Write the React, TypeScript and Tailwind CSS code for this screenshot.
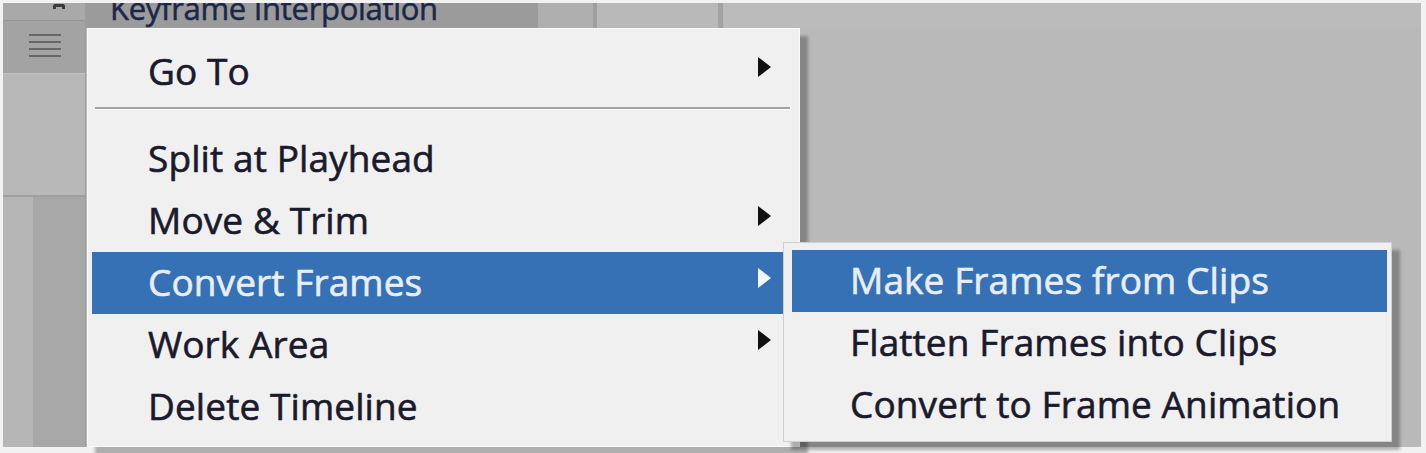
import { ReactNode } from "react";

const font = { fontFamily: '"Open Sans", "Noto Sans", Arial, sans-serif' };

function Arrow({ light }: { light?: boolean }) {
  return (
    <svg width="15" height="22" viewBox="0 0 15 22" className="shrink-0">
      <path d="M1 1 L14 11 L1 21 Z" fill={light ? "#f4f6fa" : "#111111"} />
    </svg>
  );
}

function Item({
  label,
  sub,
  active,
  pl = "pl-[56px]",
}: {
  label: string;
  sub?: boolean;
  active?: boolean;
  pl?: string;
}) {
  return (
    <div
      className={`flex items-center h-[62px] ${pl} pr-[18px] text-[37px] tracking-[0.1px] [-webkit-text-stroke:0.6px_currentColor] ${
        active ? "bg-[#3671b6] text-[#e9eef6]" : "text-[#1b1a2b]"
      }`}
    >
      <span className="flex-1 leading-none whitespace-nowrap pb-[4px]">{label}</span>
      {sub && (
        <span className="-mt-[10px] flex">
          <Arrow light={active} />
        </span>
      )}
    </div>
  );
}

function Panel({ children, className }: { children: ReactNode; className: string }) {
  return <div className={className}>{children}</div>;
}

export default function App() {
  return (
    <div
      className="relative w-[1426px] h-[453px] overflow-hidden bg-[#f2f2f2] pt-[3px] pl-[3px] pr-[5px] pb-[6px]"
      style={font}
    >
      <div className="flex h-full bg-[#b9b9b9]">
        {/* left rail */}
        <div className="w-[83px] flex flex-col border-r border-[#9d9d9d]">
          <div className="h-[17px] bg-[#a9a9a9] relative">
            <div className="absolute left-[50px] top-[1px] w-[12px] h-[5px] border-t-[3px] border-l-[3px] border-r-[3px] border-[#3a3a3a] rounded-t-[3px]" />
          </div>
          <div className="h-[53px] bg-[#a3a3a3] border-t border-[#959595] flex items-center justify-center">
            <div className="flex flex-col gap-[5px] w-[32px] -mt-[4px] ml-[1px]">
              <div className="h-[2px] bg-[#676767]" />
              <div className="h-[2px] bg-[#676767]" />
              <div className="h-[2px] bg-[#676767]" />
              <div className="h-[2px] bg-[#676767]" />
            </div>
          </div>
          <div className="h-[124px] bg-[#b8b8b8] border-t border-[#c2c2c2] border-b-2 border-b-[#9f9f9f]" />
          <div className="flex-1 flex">
            <div className="w-[30px] bg-[#b6b6b6]" />
            <div className="flex-1 bg-[#a8a8a8]" />
          </div>
        </div>

        {/* main area */}
        <div className="flex-1 flex flex-col">
          <div className="h-[25px] flex">
            <Panel className="w-[452px] bg-[#9b9b9b] overflow-hidden relative">
              <span className="absolute left-[24px] -top-[15px] text-[31px] text-[#1c2747] tracking-[-0.3px] leading-[40px] whitespace-nowrap [-webkit-text-stroke:0.5px_currentColor]">
                Keyframe Interpolation
              </span>
            </Panel>
            <div className="w-[55px] bg-[#afafaf]" />
            <div className="w-[4px] bg-[#9f9f9f]" />
            <div className="w-[121px] bg-[#b9b9b9]" />
            <div className="w-[5px] bg-[#a2a2a2]" />
            <div className="flex-1 bg-[#bbbbbb]" />
          </div>
          <div className="flex-1 bg-[#b9b9b9]" />
        </div>
      </div>

      {/* main context menu */}
      <div className="absolute left-[87px] top-[28px] w-[713px] h-[419px] bg-[#f0f0f0] border border-[#fafafa] shadow-[8px_8px_3px_rgba(0,0,0,0.28)] pt-[12px] pl-[4px] pr-[9px]">
        <Item label="Go To" sub />
        <div className="mt-[4px] ml-[3px] h-[2px] bg-[#a3a3a3] border-b border-white box-content" />
        <div className="mt-[18px]">
          <Item label="Split at Playhead" />
          <Item label="Move & Trim" sub />
          <Item label="Convert Frames" sub active />
          <Item label="Work Area" sub />
          <Item label="Delete Timeline" />
        </div>
      </div>

      {/* submenu */}
      <div className="absolute left-[783px] top-[242px] w-[609px] h-[200px] bg-[#f0f0f0] border border-[#cfcfcf] shadow-[8px_8px_3px_rgba(0,0,0,0.28)] pt-[7px] pl-[8px] pr-[4px]">
        <Item label="Make Frames from Clips" active pl="pl-[58px]" />
        <Item label="Flatten Frames into Clips" pl="pl-[58px]" />
        <Item label="Convert to Frame Animation" pl="pl-[58px]" />
      </div>
    </div>
  );
}
